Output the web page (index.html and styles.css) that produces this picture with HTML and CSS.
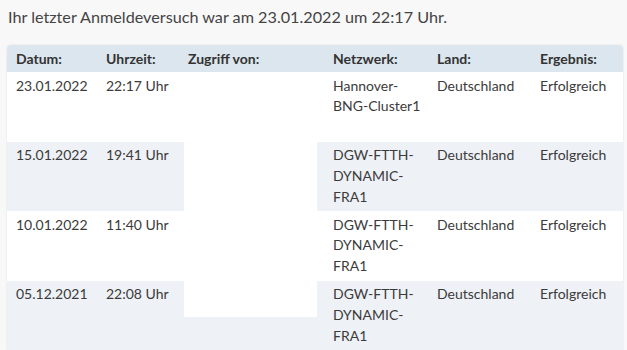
FILE: index.html
```html
<!DOCTYPE html>
<html lang="de">
<head>
<meta charset="utf-8">
<link rel="stylesheet" href="styles.css">
</head>
<body>
<div class="page">
  <p class="intro">Ihr letzter Anmeldeversuch war am 23.01.2022 um 22:17 Uhr.</p>
  <div class="table-wrap">
    <table class="log">
      <colgroup>
        <col class="c-date"><col class="c-time"><col class="c-from"><col class="c-net"><col class="c-land"><col class="c-res">
      </colgroup>
      <thead>
        <tr><th>Datum:</th><th>Uhrzeit:</th><th>Zugriff von:</th><th>Netzwerk:</th><th>Land:</th><th>Ergebnis:</th></tr>
      </thead>
      <tbody>
        <tr><td>23.01.2022</td><td>22:17 Uhr</td><td></td><td>Hannover-<br>BNG-Cluster1</td><td>Deutschland</td><td>Erfolgreich</td></tr>
        <tr class="alt"><td>15.01.2022</td><td>19:41 Uhr</td><td></td><td>DGW-FTTH-<br>DYNAMIC-<br>FRA1</td><td>Deutschland</td><td>Erfolgreich</td></tr>
        <tr><td>10.01.2022</td><td>11:40 Uhr</td><td></td><td>DGW-FTTH-<br>DYNAMIC-<br>FRA1</td><td>Deutschland</td><td>Erfolgreich</td></tr>
        <tr class="alt"><td>05.12.2021</td><td>22:08 Uhr</td><td></td><td>DGW-FTTH-<br>DYNAMIC-<br>FRA1</td><td>Deutschland</td><td>Erfolgreich</td></tr>
      </tbody>
    </table>
    <div class="redact"></div>
  </div>
</div>
</body>
</html>
```
FILE: styles.css
```css
html, body {
  margin: 0;
  padding: 0;
  background: #f8f8f8;
}
body {
  font-family: Lato, "Open Sans", sans-serif;
  color: #3b3b3b;
  font-size: 14px;
}
.page {
  padding: 0 4px 0 7px;
}
.intro {
  margin: 0;
  padding: 5px 0 0 1px;
  height: 45px;
  box-sizing: border-box;
  font-size: 16.2px;
  line-height: 24px;
  color: #444;
}
.table-wrap {
  position: relative;
  width: 616px;
  border-radius: 4px 4px 0 0;
  overflow: hidden;
  box-shadow: 0 0 2px rgba(0,0,0,0.12);
}
.log {
  width: 616px;
  border-collapse: collapse;
  table-layout: fixed;
  background: #fff;
}
.c-date { width: 90px; }
.c-time { width: 82px; }
.c-from { width: 145px; }
.c-net { width: 104px; }
.c-land { width: 103px; }
.c-res { width: 92px; }
.log th {
  background: #dce6ee;
  text-align: left;
  font-weight: 700;
  color: #333;
  height: 27px;
  padding: 0 9px;
  line-height: 26px;
  box-sizing: border-box;
}
.log td {
  vertical-align: top;
  padding: 3.5px 9px 3px;
  line-height: 20.8px;
  height: 69.6px;
  box-sizing: border-box;
  white-space: nowrap;
}
.log tr.alt td {
  background: #eef1f6;
}
.redact {
  position: absolute;
  left: 177px;
  top: 27px;
  width: 133px;
  height: 245px;
  background: #fff;
}
```
